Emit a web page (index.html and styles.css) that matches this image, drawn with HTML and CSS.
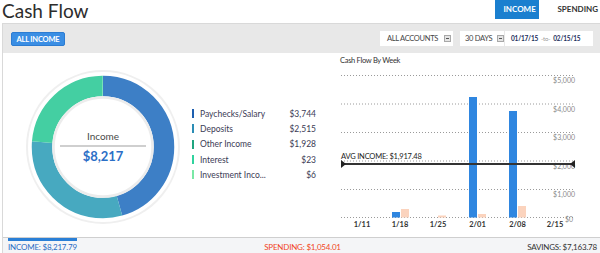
FILE: index.html
```html
<!DOCTYPE html>
<html lang="en">
<head>
    <meta charset="UTF-8">
    <title>Cash Flow</title>
    <link rel="stylesheet" href="styles.css">
</head>
<body>

<header class="top">
    <h1>Cash Flow</h1>
    <nav class="tabs">
        <span class="tab active">INCOME</span>
        <span class="tab">SPENDING</span>
    </nav>
</header>

<div class="card">
    <div class="toolbar">
        <button class="btn-blue">ALL INCOME</button>
        <div class="filters">
            <div class="select accounts">ALL ACCOUNTS <span class="drop"></span></div>
            <div class="range">
                <div class="select days">30 DAYS <span class="drop"></span></div>
                <div class="dates"><b>01/17/15</b> <span class="to">-to-</span> <b>02/15/15</b></div>
            </div>
        </div>
    </div>

    <div class="content">
        <svg class="donut" width="160" height="160" viewBox="0 0 160 160">
            <circle cx="80" cy="80" r="76" fill="none" stroke="#efefef" stroke-width="2"/>
            <g transform="rotate(-90 80 80)" fill="none" stroke-width="20.5">
                <circle cx="80" cy="80" r="61" stroke="#3d7fc6" stroke-dasharray="174.63 383.27" stroke-dashoffset="0"/>
                <circle cx="80" cy="80" r="61" stroke="#47a9c0" stroke-dasharray="117.31 383.27" stroke-dashoffset="-174.63"/>
                <circle cx="80" cy="80" r="61" stroke="#44cfa2" stroke-dasharray="89.93 383.27" stroke-dashoffset="-291.94"/>
                <circle cx="80" cy="80" r="61" stroke="#5fdcab" stroke-dasharray="1.07 383.27" stroke-dashoffset="-381.87"/>
                <circle cx="80" cy="80" r="61" stroke="#9ff0c4" stroke-dasharray="0.6 383.27" stroke-dashoffset="-382.94"/>
            </g>
            <circle cx="80" cy="80" r="49.5" fill="#fff" stroke="#ececec" stroke-width="2.5"/>
            <text class="donut-label" x="80" y="73" text-anchor="middle">Income</text>
            <line x1="37" y1="79" x2="123" y2="79" stroke="#cfcfcf" stroke-width="2"/>
            <text class="donut-value" x="80" y="93.5" text-anchor="middle">$8,217</text>
        </svg>

        <ul class="legend">
            <li><i style="background:#1d5fb0"></i><span>Paychecks/Salary</span><em>$3,744</em></li>
            <li><i style="background:#2b8db5"></i><span>Deposits</span><em>$2,515</em></li>
            <li><i style="background:#1fa57f"></i><span>Other Income</span><em>$1,928</em></li>
            <li><i style="background:#30d39e"></i><span>Interest</span><em>$23</em></li>
            <li><i style="background:#7ae8a6"></i><span>Investment Inco...</span><em>$6</em></li>
        </ul>

        <div class="chart">
            <div class="chart-title">Cash Flow By Week</div>
            <svg width="255" height="168" viewBox="0 0 255 168">
                <g stroke="#9a9a9a" stroke-width="1" stroke-dasharray="1 2">
                    <line x1="6" y1="9.5" x2="240" y2="9.5"/>
                    <line x1="6" y1="38" x2="240" y2="38"/>
                    <line x1="6" y1="66.5" x2="240" y2="66.5"/>
                    <line x1="6" y1="95" x2="240" y2="95"/>
                    <line x1="6" y1="123.5" x2="240" y2="123.5"/>
                    <line x1="6" y1="151.5" x2="240" y2="151.5"/>
                </g>
                <g class="y-axis" text-anchor="end">
                    <text x="240" y="17">$5,000</text>
                    <text x="240" y="45.5">$4,000</text>
                    <text x="240" y="74">$3,000</text>
                    <text x="240" y="102.5">$2,000</text>
                    <text x="240" y="131">$1,000</text>
                    <text x="238" y="155.5">$0</text>
                </g>
                <g fill="#fbd3bd">
                    <rect x="66" y="143" width="8" height="8.5"/>
                    <rect x="103" y="149.5" width="8" height="2"/>
                    <rect x="143" y="148" width="8" height="3.5"/>
                    <rect x="183" y="140" width="8" height="11.5"/>
                </g>
                <g fill="#2f86e0">
                    <rect x="57" y="146" width="8" height="5.5"/>
                    <rect x="134" y="31" width="8" height="120.5"/>
                    <rect x="174" y="45" width="8" height="106.5"/>
                </g>
                <text class="avg-label" x="6" y="93">AVG INCOME: $1,917.48</text>
                <line x1="7" y1="98" x2="239" y2="98" stroke="#333" stroke-width="2"/>
                <polygon points="6,94 11,98 6,102" fill="#222"/>
                <polygon points="240,94 235,98 240,102" fill="#222"/>
                <g class="x-axis" text-anchor="middle">
                    <text x="27" y="161">1/11</text>
                    <text x="65" y="161">1/18</text>
                    <text x="103" y="161">1/25</text>
                    <text x="142.5" y="161">2/01</text>
                    <text x="182.5" y="161">2/08</text>
                    <text x="220" y="161">2/15</text>
                </g>
            </svg>
        </div>
    </div>

    <div class="totals">
        <span class="income">INCOME: $8,217.79</span>
        <span class="spending">SPENDING: $1,054.01</span>
        <span class="savings">SAVINGS: $7,163.78</span>
    </div>
</div>

</body>
</html>
```

FILE: styles.css
```css
body {
    font-family: 'Lato', 'Open Sans', sans-serif;
    background-color: #fff;
    color: #333;
    margin: 0;
    width: 600px;
    height: 253px;
    overflow: hidden;
}

.top {
    display: flex;
    justify-content: space-between;
    align-items: flex-start;
    height: 23px;
}

.top h1 {
    margin: 0 0 0 2px;
    font-size: 19px;
    font-weight: 400;
    line-height: 21px;
    color: #2d2d2d;
}

.tabs {
    display: flex;
    margin-right: 2px;
}

.tab {
    font-size: 8px;
    font-weight: bold;
    color: #333;
    line-height: 19px;
    padding: 0 0 0 18px;
}

.tab.active {
    background-color: #1a7fcf;
    color: white;
    padding: 0 8px;
    width: 28px;
    text-align: center;
}

.card {
    margin-left: 2px;
    border: 1px solid #d9d9d9;
    border-right: none;
    border-bottom: none;
}

.toolbar {
    display: flex;
    justify-content: space-between;
    align-items: center;
    height: 29px;
    padding: 0 7px 0 8px;
    background-color: #e8e8e8;
}

.btn-blue {
    font-family: inherit;
    font-size: 7.5px;
    font-weight: bold;
    letter-spacing: -0.2px;
    color: white;
    background-color: #3a8ee4;
    border: 1px solid #2c7cd2;
    border-radius: 2px;
    height: 14px;
    width: 54px;
    padding: 0;
    margin-top: 1px;
}

.filters {
    display: flex;
    gap: 7px;
}

.range {
    display: flex;
}

.select {
    display: flex;
    align-items: center;
    gap: 6px;
    height: 15px;
    background-color: white;
    font-size: 7.5px;
    letter-spacing: -0.3px;
    color: #444;
    white-space: nowrap;
}

.accounts {
    width: 66px;
    padding-left: 7px;
}

.days {
    width: 39px;
    padding-left: 5px;
    gap: 5px;
}

.drop {
    flex: none;
    width: 5px;
    height: 5px;
    border: 1px solid #a8a8a8;
    background-color: #e4e4e4;
    position: relative;
}

.drop::after {
    content: "";
    position: absolute;
    left: 1px;
    top: 2px;
    width: 3px;
    height: 1px;
    background-color: #555;
}

.dates {
    display: flex;
    align-items: center;
    gap: 3px;
    height: 15px;
    width: 78px;
    padding: 0 4px 0 6px;
    margin-left: 1px;
    background-color: white;
    font-size: 6.5px;
    letter-spacing: -0.2px;
    color: #1d2f5c;
    white-space: nowrap;
}

.dates .to {
    color: #999;
    font-size: 6px;
}

.content {
    display: flex;
    height: 184px;
}

.donut {
    margin: 14px 0 0 20px;
}

.donut-label {
    font-size: 10px;
    fill: #4a4a4a;
}

.donut-value {
    font-size: 13px;
    font-weight: bold;
    fill: #2b6fc6;
}

.legend {
    list-style: none;
    margin: 53px 0 0 9px;
    padding: 0;
    width: 124px;
}

.legend li {
    display: flex;
    align-items: center;
    height: 15.3px;
    font-size: 8.5px;
    color: #3b3b55;
}

.legend i {
    width: 2px;
    height: 9px;
    margin-right: 6px;
}

.legend span {
    flex: 1;
}

.legend em {
    font-style: normal;
}

.chart {
    margin-left: 19px;
}

.chart-title {
    font-size: 7.5px;
    letter-spacing: -0.3px;
    line-height: 10px;
    padding: 3px 0 0 5px;
    color: #333;
}

.chart svg {
    display: block;
}

.y-axis text {
    font-size: 7px;
    fill: #8a8a8a;
}

.x-axis text {
    font-size: 7.5px;
    font-weight: bold;
    fill: #333;
}

.avg-label {
    font-size: 7.5px;
    letter-spacing: -0.2px;
    fill: #222;
}

.totals {
    display: grid;
    grid-template-columns: 1fr auto 1fr;
    align-items: start;
    height: 15px;
    padding: 0 3px 0 5px;
    background-color: #f4f5f7;
    border-top: 1px solid #cfcfcf;
    font-size: 8px;
    line-height: 10px;
    letter-spacing: -0.2px;
    white-space: nowrap;
}

.totals .income {
    justify-self: start;
    color: #2a6cc4;
    border-top: 3px solid #2a7fd6;
    padding-top: 1px;
}

.totals .spending {
    color: #f2461e;
    padding-top: 4px;
}

.totals .savings {
    justify-self: end;
    color: #333;
    padding-top: 4px;
}
```
